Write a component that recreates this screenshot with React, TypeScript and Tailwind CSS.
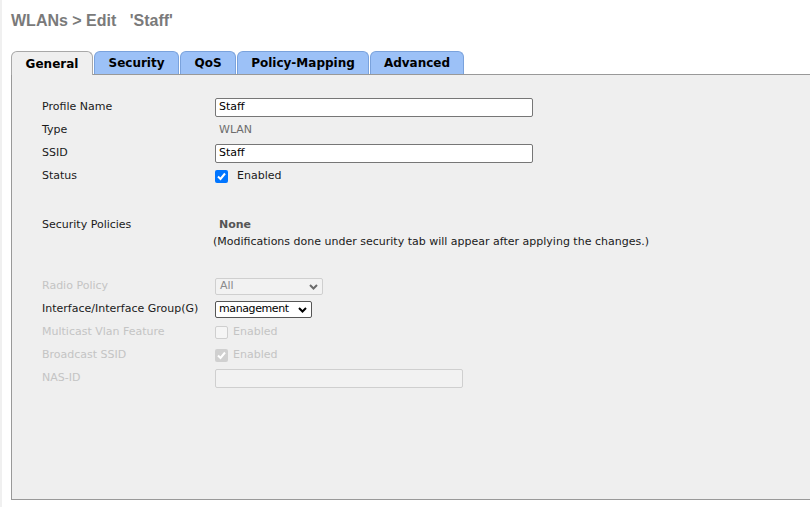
import React from "react"

const tabs = ["General", "Security", "QoS", "Policy-Mapping", "Advanced"]
const tabWidths = ["w-[82px]", "w-[85px]", "w-[56px]", "w-[132px]", "w-[94px]"]

const Row: React.FC<{ label: string; dim?: boolean; children?: React.ReactNode }> = ({ label, dim, children }) => (
	<div className="flex items-center h-[23px]">
		<div className={`w-[173px] shrink-0 ${dim ? "text-[#c4c4c4]" : "text-[#1a1a1a]"}`}>{label}</div>
		<div className="flex items-center">{children}</div>
	</div>
)

const Chevron: React.FC<{ color: string }> = ({ color }) => (
	<svg width="9" height="6" viewBox="0 0 9 6" className="absolute right-[4px] top-1/2 -translate-y-1/2">
		<path d="M1 1 L4.5 4.5 L8 1" fill="none" stroke={color} strokeWidth="2" />
	</svg>
)

const Check: React.FC = () => (
	<svg width="11" height="11" viewBox="0 0 11 11">
		<path d="M2 5.5 L4.5 8 L9 2.5" fill="none" stroke="white" strokeWidth="2" />
	</svg>
)

const App: React.FC = () => {
	return (
		<div className="h-[507px] w-[810px] bg-white border-l-2 border-[#f0f0f0] flex flex-col overflow-hidden font-['DejaVu_Sans',sans-serif] text-[11px]">
			<div className="pl-[9px] pt-[9px] h-[51px] font-['Liberation_Sans',sans-serif] font-bold text-[16px] text-[#7a7a7a] whitespace-pre">
				{"WLANs > Edit   'Staff'"}
			</div>
			<div className="flex pl-[9px] items-end h-[23px]">
				{tabs.map((t, i) => (
					<div
						key={t}
						className={`flex items-center justify-center rounded-t-[6px] border border-b-0 font-bold text-[12px] text-black ${tabWidths[i]} ${
							i === 0 ? "bg-[#efefef] border-[#a8a8a8] relative z-10 h-[24px] -mb-px" : "h-[23px] bg-[#9cc1f7] border-[#7aa2dc] ml-px"
						}`}
					>
						{t}
					</div>
				))}
			</div>
			<div className="flex-1 ml-[9px] mb-[7px] bg-[#efefef] border border-r-0 border-[#999] pl-[30px] pt-[21px]">
				<Row label="Profile Name">
					<div className="w-[318px] h-[19px] bg-white border border-[#767676] rounded-[2px] px-[3px] flex items-center text-black">Staff</div>
				</Row>
				<Row label="Type">
					<span className="pl-[4px] text-[#6d6d6d]">WLAN</span>
				</Row>
				<Row label="SSID">
					<div className="w-[318px] h-[19px] bg-white border border-[#767676] rounded-[2px] px-[3px] flex items-center text-black">Staff</div>
				</Row>
				<Row label="Status">
					<div className="w-[13px] h-[13px] bg-[#0075ff] rounded-[2px] flex items-center justify-center">
						<Check />
					</div>
					<span className="ml-[9px] text-[#1a1a1a]">Enabled</span>
				</Row>
				<div className="mt-[26px]">
					<Row label="Security Policies">
						<span className="pl-[4px] font-bold text-[#555]">None</span>
					</Row>
				</div>
				<div className="pl-[171px] h-[18px] -mt-[3px] text-[#1a1a1a]">
					(Modifications done under security tab will appear after applying the changes.)
				</div>
				<div className="mt-[23px]">
					<Row label="Radio Policy" dim>
						<div className="relative w-[108px] h-[17px] bg-[#f2f2f2] border border-[#cfcfcf] rounded-[2px] px-[4px] flex items-center text-[#8a8a8a]">
							All
							<Chevron color="#6b6b6b" />
						</div>
					</Row>
					<Row label="Interface/Interface Group(G)">
						<div className="relative w-[97px] h-[17px] bg-white border border-[#555] rounded-[2px] pl-[3px] flex items-center text-black tracking-[-0.4px]">
							management
							<Chevron color="#000" />
						</div>
					</Row>
					<Row label="Multicast Vlan Feature" dim>
						<div className="w-[13px] h-[13px] bg-[#f5f5f5] border border-[#cfcfcf] rounded-[2px]" />
						<span className="ml-[5px] text-[#c4c4c4]">Enabled</span>
					</Row>
					<Row label="Broadcast SSID" dim>
						<div className="w-[13px] h-[13px] bg-[#d0d0d0] rounded-[2px] flex items-center justify-center">
							<Check />
						</div>
						<span className="ml-[5px] text-[#c4c4c4]">Enabled</span>
					</Row>
					<Row label="NAS-ID" dim>
						<div className="w-[248px] h-[19px] bg-[#f2f2f2] border border-[#cfcfcf] rounded-[2px]" />
					</Row>
				</div>
			</div>
		</div>
	)
}

export default App
